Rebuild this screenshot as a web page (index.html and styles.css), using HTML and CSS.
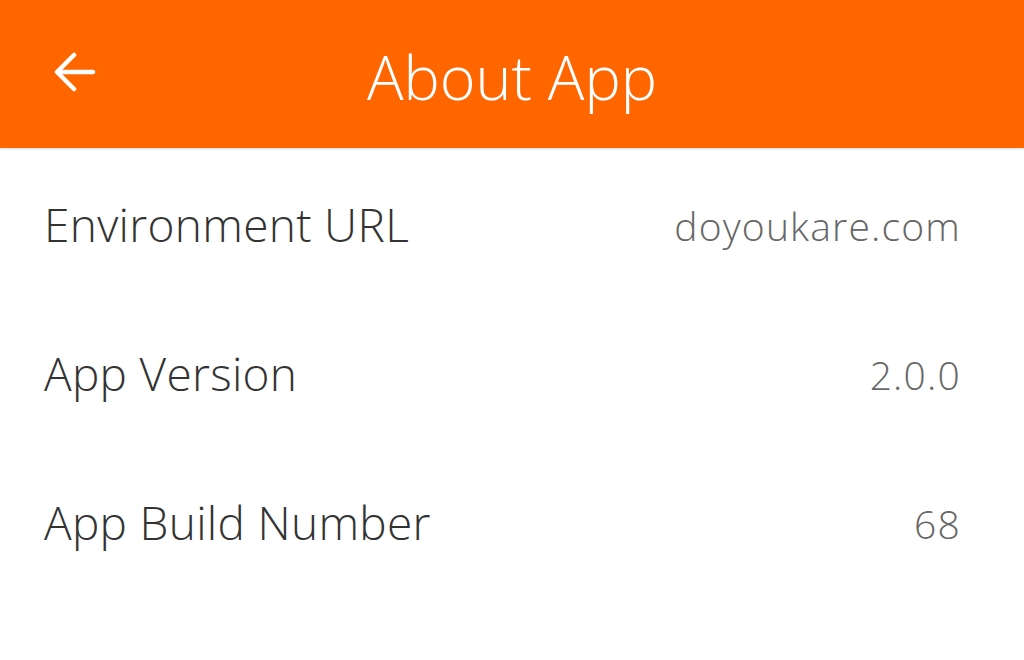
FILE: index.html
```html
<!DOCTYPE html>
<html>
<head>
<meta charset="utf-8">
<link rel="stylesheet" href="styles.css">
</head>
<body>
<div class="app">
  <header class="bar">
    <div class="back">
      <svg width="44" height="40" viewBox="0 0 44 40"><path d="M40 20H5M21 3L4 20l17 17" fill="none" stroke="#fff" stroke-width="4.5" stroke-linecap="round" stroke-linejoin="round"/></svg>
    </div>
    <div class="title">About App</div>
  </header>
  <div class="list">
    <div class="row"><span class="label">Environment URL</span><span class="value">doyoukare.com</span></div>
    <div class="row"><span class="label">App Version</span><span class="value">2.0.0</span></div>
    <div class="row"><span class="label">App Build Number</span><span class="value">68</span></div>
  </div>
</div>
</body>
</html>
```
FILE: styles.css
```css
html, body { margin: 0; padding: 0; background: #fff; }
body { font-family: "Open Sans", "Noto Sans", sans-serif; width: 1024px; height: 660px; overflow: hidden; }
.bar {
  height: 148px;
  background: #ff6600;
  display: flex;
  align-items: center;
  position: relative;
  box-shadow: 0 1px 2px rgba(0,0,0,0.15);
}
.back { padding-left: 53px; display: flex; align-items: center; margin-top: -4px; }
.title {
  position: absolute;
  left: 0; right: 0;
  text-align: center;
  color: #fff;
  font-size: 61px;
  font-weight: 350;
  top: 35px;
  line-height: 84px;
}
.list { display: flex; flex-direction: column; }
.row {
  height: 149px;
  display: flex;
  align-items: center;
  justify-content: space-between;
  padding: 0 63px 0 44px;
}
.label { color: #333; font-size: 46px; font-weight: 350; letter-spacing: 0.3px; margin-top: 2px; }
.value { color: #666; font-size: 39px; font-weight: 350; letter-spacing: 1.2px; margin-top: 6px; }
```
